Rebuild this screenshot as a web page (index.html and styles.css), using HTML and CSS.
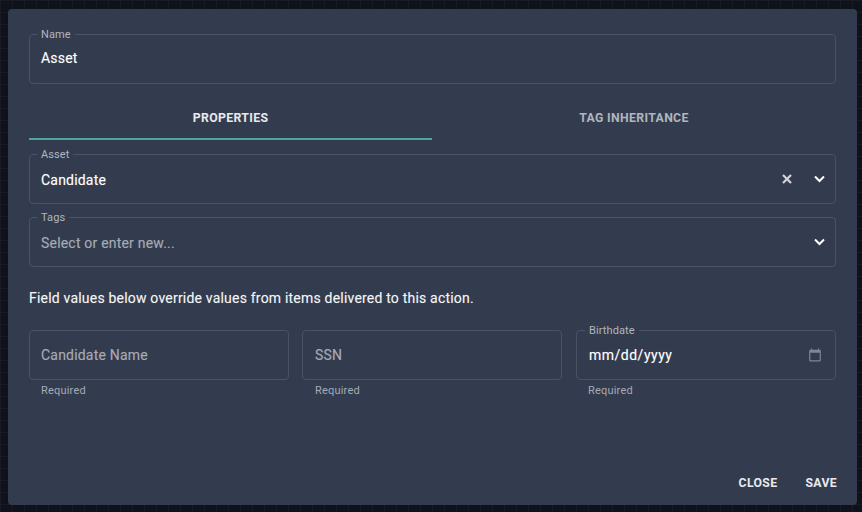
FILE: index.html
```html
<!DOCTYPE html>
<html lang="en">
<head>
<meta charset="utf-8">
<title>Asset</title>
<link rel="stylesheet" href="styles.css">
</head>
<body>
<div class="dialog">
  <div class="content">
    <div class="field"><span class="label">Name</span><span class="value up">Asset</span></div>
    <div class="tabs">
      <div class="tab active">PROPERTIES</div>
      <div class="tab">TAG INHERITANCE</div>
    </div>
    <div class="field select first"><span class="label">Asset</span><span class="value grow down">Candidate</span>
      <svg class="clear" viewBox="0 0 10 10" width="10" height="10"><path fill="none" stroke="currentColor" stroke-width="2.200" d="M1 1l8 8M9 1l-8 8"/></svg>
      <svg class="chev" viewBox="0 0 11 8" width="11" height="8"><path fill="none" stroke="currentColor" stroke-width="2" d="M1 1.500l4.500 4.500 4.500-4.500"/></svg>
    </div>
    <div class="field select"><span class="label">Tags</span><span class="value grow muted down">Select or enter new...</span>
      <svg class="chev" viewBox="0 0 11 8" width="11" height="8"><path fill="none" stroke="currentColor" stroke-width="2" d="M1 1.500l4.500 4.500 4.500-4.500"/></svg>
    </div>
    <p class="note">Field values below override values from items delivered to this action.</p>
    <div class="grid">
      <div class="cell">
        <div class="field"><span class="value muted">Candidate Name</span></div>
        <div class="helper">Required</div>
      </div>
      <div class="cell shifted">
        <div class="field"><span class="value muted">SSN</span></div>
        <div class="helper">Required</div>
      </div>
      <div class="cell dated">
        <div class="field select"><span class="label">Birthdate</span><span class="value grow date">mm/dd/yyyy</span>
          <svg class="cal" viewBox="0 0 24 24" width="14" height="14"><path fill="currentColor" d="M20 3h-1V1h-2v2H7V1H5v2H4c-1.100 0-2 .9-2 2v16c0 1.100.9 2 2 2h16c1.100 0 2-.9 2-2V5c0-1.100-.9-2-2-2zm0 18H4V8h16v13z"/></svg>
        </div>
        <div class="helper">Required</div>
      </div>
    </div>
  </div>
  <div class="actions">
    <button class="btn">CLOSE</button>
    <button class="btn">SAVE</button>
  </div>
</div>
</body>
</html>
```
FILE: styles.css
```css
* { box-sizing: border-box; }
html, body { height: 100%; }
body {
  margin: 0;
  padding: 9px 5px 7px 8px;
  overflow: hidden;
  font-family: Roboto, sans-serif;
  background-color: #0f121a;
  background-image:
    linear-gradient(#181b24 1px, transparent 1px),
    linear-gradient(90deg, #181b24 1px, transparent 1px);
  background-size: 12px 12px;
}
.dialog {
  height: 100%;
  background: #333c4e;
  border-radius: 4px;
  display: flex;
  flex-direction: column;
  justify-content: space-between;
  color: #fff;
}
.content { padding: 25px 21px 0; }
.field {
  position: relative;
  display: flex;
  align-items: center;
  height: 50px;
  padding: 0 11px;
  border: 1px solid #4a5366;
  border-radius: 4px;
}
.label {
  position: absolute;
  top: -7px;
  left: 7px;
  padding: 0 4px;
  background: #333c4e;
  color: #b0b5bf;
  font-size: 11px;
  line-height: 13px;
  letter-spacing: .1px;
}
.value {
  font-size: 14px;
  letter-spacing: .2px;
  color: #fff;
  text-shadow: 0 0 1px rgba(255, 255, 255, .35);
}
.muted { color: #a5aab5; text-shadow: 0 0 1px rgba(165, 170, 181, .35); }
.date { letter-spacing: .5px; }
.grow { flex: 1; }
.up { margin-top: -2px; }
.down { margin-top: 2px; }
.tabs { display: flex; height: 56px; }
.tab {
  flex: 1;
  display: flex;
  align-items: center;
  justify-content: center;
  padding-top: 13px;
  font-size: 12.25px;
  font-weight: 700;
  letter-spacing: .35px;
  color: #b0b5bf;
  border-bottom: 2px solid transparent;
}
.tab.active { flex: 0 0 403px; color: #e8eaed; border-bottom-color: #4aa8a0; }
.first { margin-top: 14px; }
.select + .select { margin-top: 13px; }
.clear { color: #d2d5da; margin-right: 22px; }
.chev { color: #fff; margin-right: -1px; }
.cal { color: #7f8796; margin-right: 2px; }
.note {
  margin: 22px 0 0;
  font-size: 14px;
  line-height: 18px;
  letter-spacing: .2px;
  color: #f4f5f7;
  text-shadow: 0 0 1px rgba(255, 255, 255, .3);
}
.grid { display: grid; grid-template-columns: 273px 274px 260px; margin-top: 23px; }
.cell { width: 260px; }
.shifted .field { padding-left: 12px; }
.shifted .helper { margin-left: 13px; }
.dated .field { padding-left: 12px; }
.dated .label { left: 8px; }
.helper { margin: 4px 0 0 12px; font-size: 11px; line-height: 13px; letter-spacing: .2px; color: #a5aab5; }
.actions { display: flex; justify-content: flex-end; gap: 28px; padding: 0 20px 14px; }
.btn {
  padding: 0;
  border: 0;
  background: none;
  color: #e8eaed;
  font: 700 12.25px/16px Roboto, sans-serif;
  letter-spacing: .35px;
}
```
